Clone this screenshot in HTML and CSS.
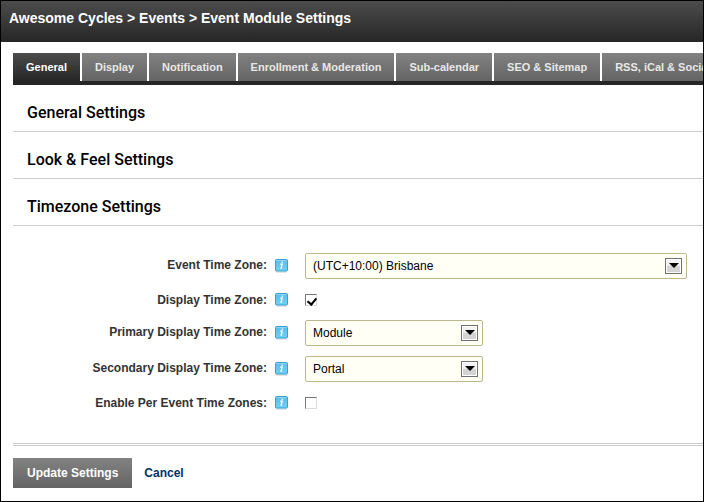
FILE: index.html
```html
<!DOCTYPE html>
<html lang="en">
<head>
<meta charset="utf-8">
<meta name="viewport" content="width=device-width, initial-scale=1">
<title>Event Module Settings</title>
<link rel="stylesheet" href="styles.css">
</head>
<body>
<svg class="defs" aria-hidden="true">
  <defs>
    <linearGradient id="infoFill" x1="0" y1="0" x2="0" y2="1">
      <stop offset="0" stop-color="#5bbbe8"/>
      <stop offset="1" stop-color="#6fd0f8"/>
    </linearGradient>
  </defs>
  <symbol id="info" viewBox="0 0 13 14">
    <rect x="1" y="12" width="11" height="2" rx="1" fill="#e2e6e8"/>
    <rect x="0.5" y="0.5" width="12" height="11.5" rx="1" fill="url(#infoFill)" stroke="#3a9fd2"/>
    <path d="M1.5 1.5H11.5" stroke="#8fd3f3"/>
    <path d="M6.6 3.2h1.6" stroke="#fff" stroke-width="1.2"/>
    <path d="M5.2 5.2H7.2L6.1 9.2H7.2" fill="none" stroke="#fff" stroke-width="1.3"/>
  </symbol>
</svg>
<div class="dialog">
  <header class="titlebar"><h1>Awesome Cycles &gt; Events &gt; Event Module Settings</h1></header>
  <main class="content">
    <nav class="tabs">
      <a class="tab active" href="#general">General</a>
      <a class="tab" href="#display">Display</a>
      <a class="tab" href="#notification">Notification</a>
      <a class="tab" href="#enrollment">Enrollment &amp; Moderation</a>
      <a class="tab" href="#subcalendar">Sub-calendar</a>
      <a class="tab" href="#seo">SEO &amp; Sitemap</a>
      <a class="tab" href="#rss">RSS, iCal &amp; Social</a>
    </nav>
    <h2 class="section">General Settings</h2>
    <h2 class="section">Look &amp; Feel Settings</h2>
    <h2 class="section">Timezone Settings</h2>
    <form class="form">
      <div class="row">
        <label for="tz">Event Time Zone:</label>
        <svg class="info"><use href="#info"/></svg>
        <div class="select wide"><select id="tz"><option>(UTC+10:00) Brisbane</option></select><span class="arrow"></span></div>
      </div>
      <div class="row check">
        <label for="show">Display Time Zone:</label>
        <svg class="info"><use href="#info"/></svg>
        <input type="checkbox" id="show" checked>
      </div>
      <div class="row">
        <label for="primary">Primary Display Time Zone:</label>
        <svg class="info"><use href="#info"/></svg>
        <div class="select"><select id="primary"><option>Module</option></select><span class="arrow"></span></div>
      </div>
      <div class="row">
        <label for="secondary">Secondary Display Time Zone:</label>
        <svg class="info"><use href="#info"/></svg>
        <div class="select"><select id="secondary"><option>Portal</option></select><span class="arrow"></span></div>
      </div>
      <div class="row check">
        <label for="per">Enable Per Event Time Zones:</label>
        <svg class="info"><use href="#info"/></svg>
        <input type="checkbox" id="per">
      </div>
      <div class="actions">
        <button type="button">Update Settings</button>
        <a href="#cancel">Cancel</a>
      </div>
    </form>
  </main>
</div>
</body>
</html>
```
FILE: styles.css
```css
* { box-sizing: border-box; }
body {
  margin: 0;
  background: #fff;
  color: #333;
  font: 12px/18px "Liberation Sans", Arial, sans-serif;
}
.defs { position: absolute; width: 0; height: 0; }
.dialog { min-height: 100vh; border: 1px solid #000; overflow: hidden; }
.titlebar {
  padding: 9px 8px 15px;
  background: linear-gradient(#4c4c4c, #262626);
}
.titlebar h1 { margin: 0; color: #fff; font-size: 14px; line-height: 17px; }
.content { padding: 11px 0 12px 12px; }
.tabs {
  display: flex;
  gap: 2px;
  height: 32px;
  border-bottom: 4px solid #262626;
  overflow: hidden;
}
.tab {
  flex: none;
  padding: 0 13px;
  background: linear-gradient(#828282, #646464);
  color: #e8e8e8;
  font-size: 11px;
  font-weight: bold;
  line-height: 28px;
  text-decoration: none;
}
.tab.active {
  background: linear-gradient(#4c4c4c, #262626);
  color: #fff;
}
.section {
  margin: 0;
  padding: 16px 14px 6px;
  border-bottom: 1px solid #ccc;
  color: #000;
  font: 500 16px/24px Roboto, sans-serif;
}
.form { padding-top: 27px; }
.row {
  display: grid;
  grid-template-columns: 254px 13px minmax(0, 1fr);
  column-gap: 8px;
  align-items: center;
  height: 26px;
  margin-bottom: 10px;
}
.row.check { height: 21px; }
.row label { padding-bottom: 2px; text-align: right; font-weight: bold; line-height: 16px; }
.row.check label { padding-bottom: 0; }
.info { width: 13px; height: 14px; }
.select { position: relative; width: 178px; margin-left: 9px; }
.select.wide { width: auto; margin-right: 16px; }
select {
  display: block;
  width: 100%;
  height: 26px;
  margin: 0;
  padding: 0 28px 0 7px;
  appearance: none;
  border: 1px solid #bdb78c;
  border-radius: 2px;
  background: #fffff5;
  color: #000;
  font: 12px "Liberation Sans", Arial, sans-serif;
}
.arrow {
  position: absolute;
  top: 5px;
  right: 5px;
  width: 17px;
  height: 16px;
  border: 1px solid #707070;
  background: linear-gradient(#f2f2f2 45%, #d4d4d4 50%);
  box-shadow: inset 0 0 0 1px #fff;
  pointer-events: none;
}
.arrow::after {
  content: "";
  position: absolute;
  top: 4px;
  left: 3px;
  border: solid transparent;
  border-width: 5px 5px 0;
  border-top-color: #000;
}
input[type="checkbox"] {
  width: 12px;
  height: 12px;
  margin: 0 0 0 9px;
  appearance: none;
  border: 1px solid;
  border-color: #777 #dcdcdc #dcdcdc #777;
  background: #fff;
}
input[type="checkbox"]:checked::after {
  content: "";
  display: block;
  width: 4px;
  height: 7px;
  margin: 1px 0 0 3px;
  border: solid #000;
  border-width: 0 2px 2px 0;
  transform: rotate(40deg);
}
.actions {
  display: flex;
  align-items: center;
  gap: 12px;
  margin-top: 30px;
  padding-top: 12px;
  border-top: 3px double #ccc;
}
.actions button {
  height: 30px;
  padding: 0 14px;
  border: 0;
  background: linear-gradient(#828282, #646464);
  color: #fff;
  font: bold 12px "Liberation Sans", Arial, sans-serif;
}
.actions a { color: #036; font-weight: bold; text-decoration: none; }
```
